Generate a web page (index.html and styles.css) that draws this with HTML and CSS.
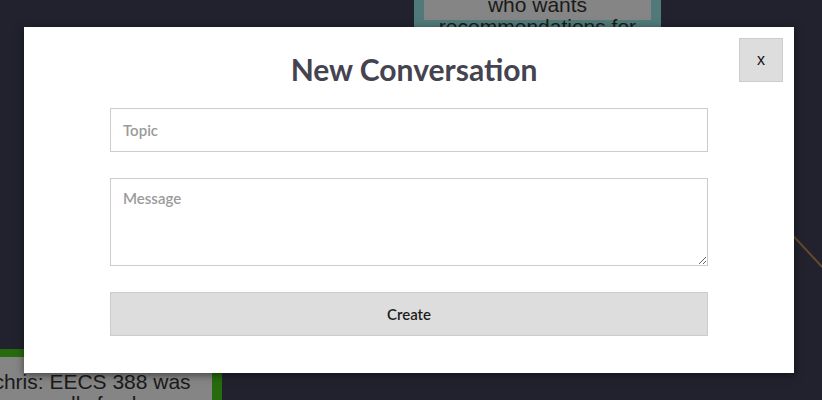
FILE: index.html
```html
<!DOCTYPE html>
<html>
<head>
<meta charset="utf-8">
<link rel="stylesheet" href="styles.css">
</head>
<body>
<div class="canvas">
  <div class="node node-top">who wants<br>recommendations for</div>
  <div class="node node-left">chris: EECS 388 was<br>really fun b</div>
  <div class="edge"></div>
</div>
<div class="overlay">
  <div class="modal">
    <button class="close">x</button>
    <h1 class="title">New Conversation</h1>
    <form class="form">
      <input class="field" type="text" placeholder="Topic">
      <textarea class="field area" placeholder="Message"></textarea>
      <button type="button" class="create">Create</button>
    </form>
  </div>
</div>
</body>
</html>
```
FILE: styles.css
```css
html, body {
  margin: 0;
  padding: 0;
  width: 822px;
  height: 400px;
  overflow: hidden;
  background: #22222e;
}
.canvas {
  position: relative;
  width: 822px;
  height: 400px;
  overflow: hidden;
}
.node {
  position: absolute;
  background: #858585;
  color: #1a1a1a;
  font-family: "Liberation Sans", Arial, sans-serif;
  font-size: 21px;
  line-height: 22px;
  text-align: center;
  box-sizing: border-box;
}
.node-top {
  left: 414px;
  top: -30px;
  width: 247px;
  height: 60px;
  border: 10px solid #507a79;
  border-top: none;
  padding-top: 24px;
}
.node-left {
  left: -36px;
  top: 349px;
  width: 258px;
  height: 80px;
  border: 10px solid #266b0e;
  border-left: none;
  border-top-width: 8px;
  padding-top: 14px;
  padding-left: 8px;
}
.edge {
  position: absolute;
  left: 790px;
  top: 231px;
  width: 50px;
  height: 2px;
  background: #664a2e;
  transform-origin: 0 0;
  transform: rotate(47deg);
}
.overlay {
  position: absolute;
  left: 0;
  top: 0;
  width: 822px;
  height: 400px;
}
.modal {
  position: absolute;
  left: 24px;
  top: 27px;
  width: 770px;
  height: 346px;
  box-sizing: border-box;
  background: #fff;
  padding: 24px 86px 37px;
  box-shadow: 0 2px 8px rgba(0,0,0,0.5);
}
.close {
  position: absolute;
  top: 11px;
  right: 11px;
  width: 44px;
  height: 44px;
  background: #dddddd;
  border: 1px solid #cccccc;
  font-family: "Liberation Sans", Arial, sans-serif;
  font-size: 16px;
  color: #111;
  padding: 0;
}
.title {
  margin: 0 0 20px;
  font-family: "Lato", "Open Sans", sans-serif;
  font-weight: 700;
  font-size: 30px;
  line-height: 37px;
  text-align: center;
  color: #44434f;
  padding-left: 10px;
}
.form {
  display: flex;
  flex-direction: column;
  gap: 26px;
}
.field {
  display: block;
  box-sizing: border-box;
  width: 598px;
  height: 44px;
  margin: 0;
  border: 1px solid #cccccc;
  background: #fff;
  padding: 0 12px;
  font-family: "Lato", "Open Sans", sans-serif;
  font-size: 15px;
  color: #333;
  outline: none;
}
.area {
  height: 88px;
  padding: 10px 12px;
  resize: vertical;
}
.field::placeholder {
  color: #9a9a9a;
  font-weight: 600;
}
.create {
  display: block;
  width: 598px;
  height: 44px;
  box-sizing: border-box;
  background: #dddddd;
  border: 1px solid #cccccc;
  font-family: "Lato", "Open Sans", sans-serif;
  font-size: 15px;
  font-weight: 600;
  color: #1c1c1c;
  margin: 0;
}
```
